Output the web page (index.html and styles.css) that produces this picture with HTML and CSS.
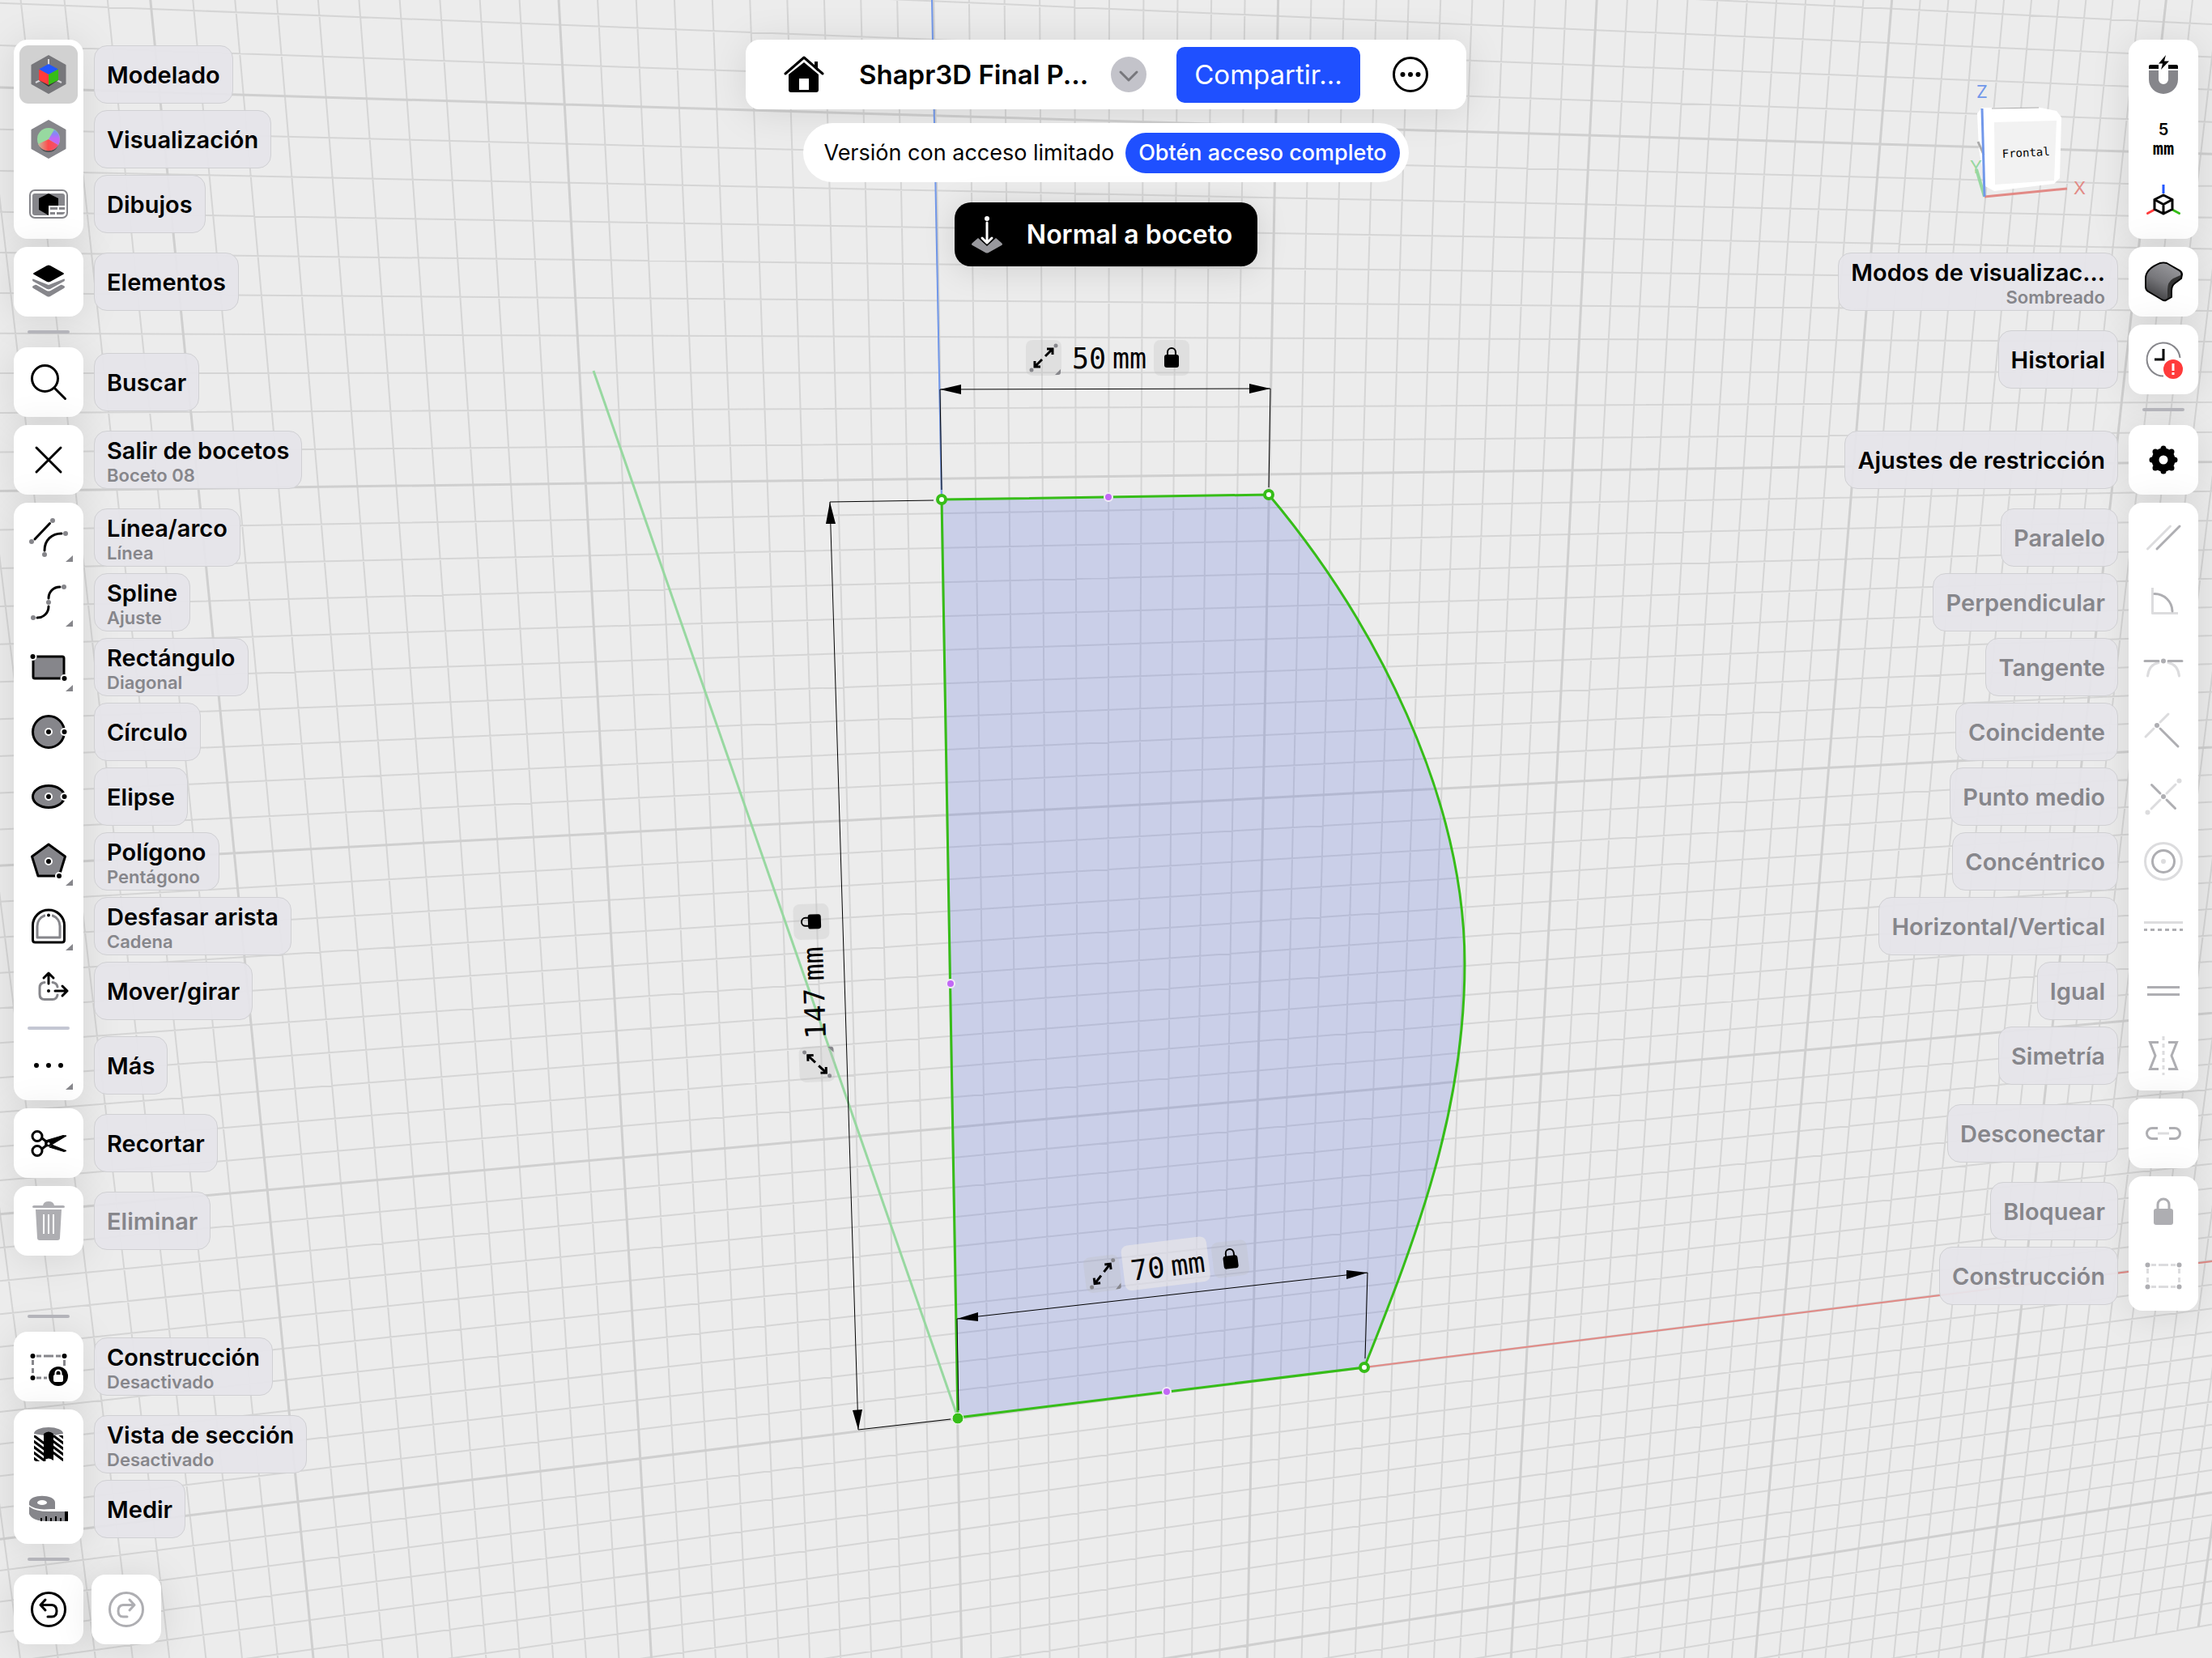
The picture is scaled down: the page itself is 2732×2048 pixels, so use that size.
FILE: index.html
```html
<!DOCTYPE html>
<html lang="es">
<head>
<meta charset="utf-8">
<meta name="viewport" content="width=device-width, initial-scale=1">
<title>Shapr3D Final P...</title>
<link rel="stylesheet" href="styles.css">
</head>
<body>
<main class="workspace">

<svg class="scene" viewBox="0 0 2732 2048" preserveAspectRatio="xMidYMid slice" role="img" aria-label="Boceto 08">
  <g id="grid"></g>
  <line class="axis-z" x1="1151" y1="0" x2="1163" y2="617"/>
  <line class="axis-y" x1="733" y1="458" x2="1183" y2="1751"/>
  <line class="axis-x" x1="1685" y1="1689" x2="2732" y2="1558"/>
  <path class="profile" d="M1183 1751 L1163 617 L1567 611 C1699 768 1809 985 1809 1190 C1809 1370 1752 1522 1685 1689 Z"/>

  <g class="dimension">
    <path d="M1163 605 L1161 481 L1569 480 L1567 602"/>
    <path d="M1153 618 L1025 620 L1060 1766 L1174 1753"/>
    <path d="M1184 1742 L1182 1629 L1689 1572 L1686 1678"/>
    <path class="head" d="M1161 481l26-6v12zM1569 480l-26-6v12zM1025 620l-5 27h12zM1060 1766l-7-24l12-1zM1182 1629l26-8v11zM1689 1572l-26-3v11z"/>
  </g>

  <g class="points">
    <circle cx="1163" cy="617" r="5"/><circle cx="1567" cy="611" r="5"/><circle cx="1685" cy="1689" r="5"/>
    <circle class="solid" cx="1183" cy="1752" r="7"/>
    <circle class="mid" cx="1369" cy="614" r="5"/><circle class="mid" cx="1174" cy="1215" r="5"/><circle class="mid" cx="1441" cy="1719" r="5"/>
  </g>

  <defs>
    <g id="expand">
      <rect class="badge" x="-22" y="-22" width="44" height="44" rx="8"/>
      <path class="expand-arrows" d="M2-2L10-10M4-11H11V-4M-2 2L-10 10M-4 11H-11V4"/>
      <path fill="#86868b" d="M14 21l7-7v4q0 3-3 3z"/>
      <circle cx="15" cy="-15" r="2.500" fill="#86868b"/><circle cx="-15" cy="15" r="2.500" fill="#86868b"/>
    </g>
    <g id="lock">
      <rect class="badge" x="-22" y="-22" width="44" height="44" rx="8"/>
      <rect x="-9" y="-4" width="18" height="16" rx="3"/>
      <path fill="none" stroke="#000" stroke-width="2" d="M-5-3V-7a5 5 0 0 1 10 0V-3"/>
    </g>
  </defs>
  <g class="measure">
    <use href="#expand" x="1289" y="442"/>
    <text x="1324" y="455">50</text><text x="1374" y="455">mm</text>
    <use href="#lock" x="1447" y="442"/>
  </g>
  <g class="measure" transform="translate(1020 1283) rotate(-92)">
    <use href="#expand" x="-31" y="-12"/>
    <text x="0" y="0">147</text><text x="72" y="0">mm</text>
    <use href="#lock" x="145" y="-13"/>
  </g>
  <g class="measure over-profile" transform="translate(1398 1582) rotate(-7)">
    <rect class="plate" x="-9" y="-44" width="106" height="56" rx="8"/>
    <use href="#expand" x="-35" y="-13"/>
    <text x="0" y="0">70</text><text x="50" y="0">mm</text>
    <use href="#lock" x="124" y="-12"/>
  </g>

  <g class="view-cube">
    <path class="sides" d="M2442 140l6-7l72 0l20 4l6 8l-2 75l-7 7l-74 9l-11-6l-8-46z"/>
    <path class="face" d="M2463 151l77-2l-3 74l-73 5z"/>
    <path d="M2460 134l58-1" stroke="#aaa" stroke-width="1"/>
    <path d="M2443 175l7 16" stroke="#aaa" stroke-width="3"/>
    <path stroke="#98d8a1" stroke-width="4" d="M2451 243L2441 209"/>
    <path stroke="#e28a86" stroke-width="3" d="M2451 243L2553 233"/>
    <path stroke="#7298ea" stroke-width="3" d="M2451 243L2448 134"/>
    <text x="2441" y="121" fill="#7298ea">Z</text>
    <text x="2433" y="214" fill="#98d8a1">Y</text>
    <text x="2561" y="240" fill="#e28a86">X</text>
    <text class="face-name" transform="translate(2473 195) rotate(-3)">Frontal</text>
  </g>
</svg>

<nav class="rail rail-left" aria-label="Herramientas">
  <div class="rail-group">
    <div class="card">
      <button class="tool selected"><span class="icon"><svg viewBox="0 0 48 48"><path fill="#77777b" stroke="#77777b" stroke-width="2" stroke-linejoin="round" d="M24 1L44.500 12.500V35.500L24 47L3.500 35.500V12.500z"/><path stroke="#d8d8dc" stroke-width="2" d="M24 5V12M8 34L14 31M40 34L34 31"/><path fill="#333" d="M12 31l12 8l12-8z"/><path fill="#2257ff" d="M24 11L36 17.500L24 24L12 17.500z"/><path fill="#ff3b3b" d="M12 17.500L24 24V37L12 31z"/><path fill="#36bd18" d="M36 17.500L24 24V37L36 31z"/></svg></span><span class="label"><span class="name">Modelado</span></span></button>
      <button class="tool"><span class="icon"><svg viewBox="0 0 48 48"><defs><linearGradient id="warm" x1="0" y1="0" x2="1" y2="0"><stop offset="0" stop-color="#c9b8a0"/><stop offset=".5" stop-color="#ff4b4b"/><stop offset="1" stop-color="#f0507a"/></linearGradient><linearGradient id="cool" x1="0" y1="0" x2="0" y2="1"><stop offset="0" stop-color="#6fa8e0"/><stop offset=".3" stop-color="#8f80f8"/><stop offset=".6" stop-color="#c268f5"/></linearGradient></defs><path fill="#86868b" stroke="#86868b" stroke-width="2" stroke-linejoin="round" d="M24 1L44.500 12.500V35.500L24 47L3.500 35.500V12.500z"/><ellipse cx="24" cy="29" rx="12" ry="11" fill="#4d4d50"/><circle cx="24" cy="24" r="14" fill="#97d9a0"/><path fill="url(#warm)" d="M24 24L11 30A14 14 0 0 0 36 31z"/><path fill="url(#cool)" d="M24 24L31 12A14 14 0 0 1 36 31z"/></svg></span><span class="label"><span class="name">Visualización</span></span></button>
      <button class="tool"><span class="icon"><svg viewBox="0 0 48 48"><rect x="1" y="7" width="46" height="34" rx="6" fill="#fff" stroke="#86868b" stroke-width="2"/><rect x="4" y="11" width="40" height="27" rx="3" fill="#86868b"/><path d="M24 11L36 17V31L24 38L12 31V17z"/><path fill="#fff" d="M24 26H44V38H24z"/><path fill="#86868b" d="M26 28h9v3h-9zM37 28h7v3h-7zM26 34h6v3h-6zM34 34h10v1q-1 2-3 2h-7z"/></svg></span><span class="label"><span class="name">Dibujos</span></span></button>
    </div>
    <div class="card">
      <button class="tool"><span class="icon"><svg viewBox="0 0 48 48"><path fill="#86868b" d="M5 29L11 26.500L24 33.500L37 26.500L43 29Q45 30.500 43 32L26 42Q24 43 22 42L5 32Q3 30.500 5 29z"/><path fill="#86868b" stroke="#fff" stroke-width="2" d="M4 19L24 27L44 19Q46 22 44 24L26 34Q24 35 22 34L4 24Q2 22 4 19z"/><path stroke="#fff" stroke-width="2" d="M22 3Q24 2 26 3L43 12.500Q45 14 43 15.500L26 25Q24 26 22 25L5 15.500Q3 14 5 12.500z"/></svg></span><span class="label"><span class="name">Elementos</span></span></button>
    </div>
    <hr>
    <div class="card">
      <button class="tool"><span class="icon"><svg class="line" viewBox="0 0 48 48"><circle cx="19.500" cy="19.500" r="16"/><path d="M31 31L44.500 44.500"/></svg></span><span class="label"><span class="name">Buscar</span></span></button>
    </div>
    <div class="card">
      <button class="tool"><span class="icon"><svg class="line" viewBox="0 0 48 48"><path d="M9 9L39 39M39 9L9 39"/></svg></span><span class="label"><span class="name">Salir de bocetos</span><small>Boceto 08</small></span></button>
    </div>
    <div class="card">
      <button class="tool has-menu"><span class="icon"><svg class="line" viewBox="0 0 48 48"><path d="M7 26L25.500 6.500M19 40C19 27 28 19 40 19"/><g class="dot-grey"><circle cx="29" cy="3" r="3"/><circle cx="3" cy="29" r="3"/><circle cx="45" cy="19" r="3"/><circle cx="19" cy="45" r="3"/></g></svg></span><span class="label"><span class="name">Línea/arco</span><small>Línea</small></span></button>
      <button class="tool has-menu"><span class="icon"><svg class="line" viewBox="0 0 48 48"><path d="M38 5C30 5 24 11 24 19M24 29C24 37 18 43 10 43"/><g class="dot-grey"><circle cx="43" cy="5" r="3"/><circle cx="24" cy="24" r="3"/><circle cx="5" cy="43" r="3"/></g></svg></span><span class="label"><span class="name">Spline</span><small>Ajuste</small></span></button>
      <button class="tool has-menu"><span class="icon"><svg class="shape" viewBox="0 0 48 48"><rect x="5" y="11" width="38" height="27" rx="2"/><circle class="node" cx="4.500" cy="11" r="4"/><circle class="node" cx="43.500" cy="38" r="4"/></svg></span><span class="label"><span class="name">Rectángulo</span><small>Diagonal</small></span></button>
      <button class="tool"><span class="icon"><svg class="shape" viewBox="0 0 48 48"><circle cx="24" cy="24" r="19.500"/><circle class="node" cx="24" cy="24" r="4"/><circle class="node" cx="43.500" cy="24" r="4"/></svg></span><span class="label"><span class="name">Círculo</span></span></button>
      <button class="tool"><span class="icon"><svg class="shape" viewBox="0 0 48 48"><ellipse cx="24" cy="24" rx="19.500" ry="13.500"/><circle class="node" cx="24" cy="24" r="4"/><circle class="node" cx="43.500" cy="24" r="4"/></svg></span><span class="label"><span class="name">Elipse</span></span></button>
      <button class="tool has-menu"><span class="icon"><svg class="shape" viewBox="0 0 48 48"><path d="M24 3L44.500 18L37 42H11L3.500 18z"/><circle class="node" cx="24" cy="24" r="4"/><circle class="node" cx="37" cy="42" r="4"/></svg></span><span class="label"><span class="name">Polígono</span><small>Pentágono</small></span></button>
      <button class="tool has-menu"><span class="icon"><svg class="line" viewBox="0 0 48 48"><path d="M4.500 41V23A19.500 19 0 0 1 43.500 23V41Q43.500 44 40.500 44H7.500Q4.500 44 4.500 41z"/><path stroke="#86868b" d="M19 11A14 14 0 0 0 10 24V38H38V24A14 14 0 0 0 29 11"/><circle class="node" cx="24" cy="10.500" r="3"/></svg></span><span class="label"><span class="name">Desfasar arista</span><small>Cadena</small></span></button>
      <button class="tool"><span class="icon"><svg class="line" viewBox="0 0 48 48"><path stroke="#86868b" d="M19 13.500Q13 14 13 20V28Q13 34.500 19 34.500H29Q34 34.500 35 29M29 13.500Q34 14 35 19"/><path d="M24 15V2M18 8L24 2L30 8M32 24H47M41 18L47 24L41 30"/><circle cx="24" cy="24" r="2" fill="#000" stroke="none"/></svg></span><span class="label"><span class="name">Mover/girar</span></span></button>
      <hr>
      <button class="tool has-menu"><span class="icon"><svg viewBox="0 0 48 48"><circle cx="9" cy="24" r="3"/><circle cx="24" cy="24" r="3"/><circle cx="39" cy="24" r="3"/></svg></span><span class="label"><span class="name">Más</span></span></button>
    </div>
    <div class="card">
      <button class="tool"><span class="icon"><svg class="line" viewBox="0 0 48 48"><circle cx="10" cy="15.500" r="6"/><circle cx="10" cy="33.500" r="6"/><path d="M16 18L21 22M16 31L21 27"/><path fill="#000" stroke-width="1" d="M20 21L42 14.500L46 15L26 27Q21 29 20 27zM28 26L46 33.500L43 34.500L25 29z"/><circle cx="24" cy="24.500" r="1.500" fill="#fff" stroke="none"/></svg></span><span class="label"><span class="name">Recortar</span></span></button>
    </div>
    <div class="card">
      <button class="tool" disabled><span class="icon"><svg viewBox="0 0 48 48" fill="#aeaeb2"><path d="M17 5Q18 0 24 0T31 5H42Q44 5 44 6.500T42 8H6Q4 8 4 6.500T6 5z"/><path d="M8 10H40L38 45Q38 48 35 48H13Q10 48 10 45z"/><path fill="#fff" d="M17 16h2v24h-2zM23 16h2v24h-2zM29 16h2v24h-2z"/></svg></span><span class="label"><span class="name">Eliminar</span></span></button>
    </div>
  </div>

  <div class="rail-group">
    <hr>
    <div class="card">
      <button class="tool"><span class="icon"><svg viewBox="0 0 48 48"><path fill="none" stroke="#86868b" stroke-width="3" d="M9 11h6M18 11h12M33 11h6M4.500 16v6M4.500 26v6M43.500 16v7M9 38h6M18 38h4"/><circle cx="4.500" cy="11" r="3"/><circle cx="43.500" cy="11" r="3"/><circle cx="4.500" cy="38" r="3"/><circle cx="36" cy="36" r="12"/><rect x="30" y="34" width="12" height="9" rx="2" fill="#fff"/><path fill="none" stroke="#fff" stroke-width="2" d="M32.500 34v-2a3.500 3.500 0 0 1 7 0v2"/></svg></span><span class="label"><span class="name">Construcción</span><small>Desactivado</small></span></button>
    </div>
    <div class="card">
      <button class="tool"><span class="icon"><svg viewBox="0 0 48 48"><defs><clipPath id="cut"><path d="M6 13H42V45H6z"/></clipPath></defs><path clip-path="url(#cut)" stroke="#000" stroke-width="3" d="M4 12l16 12M4 19l16 12M4 26l16 12M4 33l16 12M4 40l16 12M28 5l16 12M28 12l16 12M28 19l16 12M28 26l16 12M28 33l16 12"/><path fill="#86868b" d="M6 11A18 8 0 0 1 42 11L30 13H18z"/><path d="M18 11Q24 6 30 11V44Q24 39 18 44z"/></svg></span><span class="label"><span class="name">Vista de sección</span><small>Desactivado</small></span></button>
      <button class="tool"><span class="icon"><svg viewBox="0 0 48 48" fill="#86868b"><path d="M0 16C0 5 32 5 32 16V24H26Q8 26 0 19z"/><ellipse cx="16" cy="16" rx="6" ry="3" fill="#fff"/><path d="M0 21Q8 27 24 27H44V39H22Q4 39 0 30z"/><path fill="#000" d="M44 27h4v12h-4zM14 35h2v4h-2zM20 33h2v6h-2zM26 35h2v4h-2zM32 33h2v6h-2zM38 35h2v4h-2z"/></svg></span><span class="label"><span class="name">Medir</span></span></button>
    </div>
    <hr>
    <div class="history">
      <div class="card"><button class="tool" aria-label="Deshacer"><span class="icon"><svg class="line" viewBox="0 0 48 48"><circle cx="24" cy="24" r="20.500"/><path d="M20 12L14 18.500L20 25M14 18.500H28Q34 19 34 26T28 33H23"/></svg></span></button></div>
      <div class="card"><button class="tool" aria-label="Rehacer" disabled><span class="icon"><svg class="line soft" viewBox="0 0 48 48"><circle cx="24" cy="24" r="20.500"/><path d="M28 12L34 18.500L28 25M34 18.500H20Q14 19 14 26T20 33H25"/></svg></span></button></div>
    </div>
  </div>
</nav>

<header class="top">
  <div class="title-bar">
    <button class="plain" aria-label="Inicio"><svg width="50" height="48" viewBox="0 0 50 48"><path fill="none" stroke="#000" stroke-width="3" stroke-linecap="round" stroke-linejoin="round" d="M2 23L25 3L48 23"/><path d="M38 8h4v12l-4-4zM25 9L43 24V43Q43 46 40 46H9Q6 46 6 43V24z"/><path fill="#fff" d="M19 29h12v14H19z"/></svg></button>
    <h1>Shapr3D Final P...</h1>
    <button class="plain" aria-label="Opciones del diseño"><svg width="44" height="44" viewBox="0 0 44 44"><circle cx="22" cy="22" r="22" fill="#c3c3ca"/><path fill="none" stroke="#77777c" stroke-width="3" stroke-linecap="round" stroke-linejoin="round" d="M12 19l10 10l10-10"/></svg></button>
    <button class="share">Compartir...</button>
    <button class="plain" aria-label="Más opciones"><svg width="44" height="44" viewBox="0 0 44 44"><circle cx="22" cy="22" r="20.500" fill="none" stroke="#000" stroke-width="3"/><circle cx="12.500" cy="22" r="3"/><circle cx="22" cy="22" r="3"/><circle cx="31.500" cy="22" r="3"/></svg></button>
  </div>
  <div class="banner"><span>Versión con acceso limitado</span><a href="#acceso">Obtén acceso completo</a></div>
  <button class="normal"><svg width="40" height="48" viewBox="0 0 40 48"><path fill="#98989d" d="M9 28L20 38L31 28L38 34Q40 36 38 37L22 46Q20 47 18 46L2 37Q0 36 2 34z"/><circle cx="20" cy="4" r="3" fill="#fff"/><path fill="none" stroke="#fff" stroke-width="3" stroke-linecap="round" stroke-linejoin="round" d="M20 9V34M14 28L20 34L26 28"/></svg><span>Normal a boceto</span></button>
</header>

<nav class="rail rail-right" aria-label="Vista y restricciones">
  <div class="rail-group">
    <div class="card">
      <button class="tool" aria-label="Ajustar a la cuadrícula"><span class="icon"><svg viewBox="0 0 48 48"><path fill="#86868b" d="M6 19H18V30a6 6 0 0 0 12 0V19H42V30a18 18 0 0 1-36 0z"/><path d="M6 17V14Q6 12 8 12H18V17zM30 17V12H40Q42 12 42 14V17zM27 0L18 10.500H23L21 18L31 7.500H25z"/></svg></span></button>
      <button class="tool unit"><span class="icon"><span class="amount">5</span><span class="measure-unit">mm</span></span></button>
      <button class="tool" aria-label="Orientación"><span class="icon"><svg class="line" viewBox="0 0 48 48"><path stroke="#2257ff" stroke-linecap="butt" d="M24 0V11"/><path stroke="#ff3b3b" d="M4.500 35.500L12 31.500"/><path stroke="#36bd18" d="M43.500 35.500L36 31.500"/><path d="M24 13L35 18.500V30.500L24 36L13 30.500V18.500zM13 18.500L24 24.500L35 18.500M24 24.500V36"/></svg></span></button>
    </div>
    <div class="card">
      <button class="tool"><span class="icon"><svg viewBox="0 0 48 48"><defs><linearGradient id="steel" x1=".7" y1="0" x2=".2" y2="1"><stop offset="0" stop-color="#98989c"/><stop offset=".5" stop-color="#77777b"/><stop offset="1" stop-color="#3c3c3e"/></linearGradient></defs><path fill="#333" stroke="#000" stroke-width="2" stroke-linejoin="round" d="M2 20Q2 8 20 1Q24 0 28 1L44 10Q47 12 47 15L46 20L38 26Q34 29 34 35V43L27 47Q25 48 22 46L5 36Q2 34 2 30z"/><path fill="url(#steel)" d="M3 20Q3 9 20 2Q24 1 28 2L43 11Q46 13 45 16L36 20Q29 24 29 34V43Q28 47 22 45L6 35Q3 33 3 30z"/></svg></span><span class="label"><span class="name">Modos de visualizac...</span><small>Sombreado</small></span></button>
    </div>
    <div class="card">
      <button class="tool"><span class="icon"><svg viewBox="0 0 48 48"><path fill="none" stroke="#86868b" stroke-width="2" d="M44.500 22A20.500 20.500 0 1 0 24 44.500"/><path fill="none" stroke="#000" stroke-width="3" d="M24 11V24H13"/><circle cx="36" cy="36" r="12" fill="#ff3b3b"/><path stroke="#fff" stroke-width="3" d="M36 29V38M36 40V43"/></svg></span><span class="label"><span class="name">Historial</span></span></button>
    </div>
    <hr>
    <div class="card">
      <button class="tool"><span class="icon"><svg viewBox="0 0 48 48"><circle cx="24" cy="24" r="10" fill="none" stroke="#000" stroke-width="9"/><path stroke="#000" stroke-width="7" stroke-linecap="round" d="M24 10V10M24 38V38M10 24V24M38 24V24M14 14V14M34 34V34M34 14V14M14 34V34"/></svg></span><span class="label"><span class="name">Ajustes de restricción</span></span></button>
    </div>
    <div class="card">
      <button class="tool" disabled><span class="icon"><svg class="line soft" viewBox="0 0 48 48"><path class="faint" d="M4.500 38L32.500 10"/><path d="M16 38L44 10"/></svg></span><span class="label"><span class="name">Paralelo</span></span></button>
      <button class="tool" disabled><span class="icon"><svg class="line soft" viewBox="0 0 48 48"><path class="faint" stroke-linecap="butt" d="M10.500 6V37.500H42"/><path d="M13 13.500A22 22 0 0 1 35 35"/></svg></span><span class="label"><span class="name">Perpendicular</span></span></button>
      <button class="tool" disabled><span class="icon"><svg class="line soft" viewBox="0 0 48 48"><path class="faint" d="M4.500 35Q6 21 18 18.500M43.500 35Q42 21 30 18.500"/><path d="M1 16.500H18M30 16.500H47"/><circle class="fill" cx="24" cy="16.500" r="3"/></svg></span><span class="label"><span class="name">Tangente</span></span></button>
      <button class="tool" disabled><span class="icon"><svg class="line soft" viewBox="0 0 48 48"><path class="faint" d="M2 30L12 20M20 12L30 2"/><path d="M20 20L42 42"/><circle class="fill" cx="16" cy="16" r="3"/></svg></span><span class="label"><span class="name">Coincidente</span></span></button>
      <button class="tool" disabled><span class="icon"><svg class="line soft" viewBox="0 0 48 48"><path class="faint" d="M9 39L20 28M28 20L39 9"/><path d="M9.500 9.500L20 20M28 28L38.500 38.500"/><circle class="fill" cx="24" cy="24" r="3"/><circle class="fill-faint" cx="43.500" cy="4.500" r="3"/><circle class="fill-faint" cx="4.500" cy="43.500" r="3"/></svg></span><span class="label"><span class="name">Punto medio</span></span></button>
      <button class="tool" disabled><span class="icon"><svg class="line soft" viewBox="0 0 48 48"><circle class="faint" cx="24" cy="24" r="22.500"/><circle cx="24" cy="24" r="13.500"/><circle class="fill-faint" cx="24" cy="24" r="3"/></svg></span><span class="label"><span class="name">Concéntrico</span></span></button>
      <button class="tool" disabled><span class="icon"><svg class="line soft flat" viewBox="0 0 48 48"><path class="faint" d="M0 19.500H48"/><path d="M0 28.500h4M8 28.500h5M17 28.500h5M26 28.500h5M35 28.500h5M44 28.500h4"/></svg></span><span class="label"><span class="name">Horizontal/Vertical</span></span></button>
      <button class="tool" disabled><span class="icon"><svg class="line soft flat" viewBox="0 0 48 48"><path d="M4 19.500H44M4 28.500H44"/></svg></span><span class="label"><span class="name">Igual</span></span></button>
      <button class="tool" disabled><span class="icon"><svg class="line soft flat" viewBox="0 0 48 48"><path class="faint" stroke-dasharray="5 4" d="M24 0V48"/><path d="M18 7.500H7.500L14 24L7.500 40.500H18M30 7.500H40.500L34 24L40.500 40.500H30"/></svg></span><span class="label"><span class="name">Simetría</span></span></button>
    </div>
    <div class="card">
      <button class="tool" disabled><span class="icon"><svg class="line soft flat" viewBox="0 0 48 48"><path class="faint" d="M17 24H31"/><path d="M17 17.500H10A6.500 6.500 0 0 0 10 30.500H17M31 17.500H38A6.500 6.500 0 0 1 38 30.500H31"/></svg></span><span class="label"><span class="name">Desconectar</span></span></button>
    </div>
    <div class="card">
      <button class="tool" disabled><span class="icon"><svg class="line soft" viewBox="0 0 48 48"><rect x="12" y="21" width="24" height="20" rx="3" fill="#aeaeb2" stroke="none"/><path d="M17 22V16A7 7 0 0 1 31 16V22"/></svg></span><span class="label"><span class="name">Bloquear</span></span></button>
      <button class="tool" disabled><span class="icon"><svg class="line soft flat" viewBox="0 0 48 48"><path class="faint" d="M9 10.500h6M18 10.500h12M33 10.500h6M9 37.500h6M18 37.500h12M33 37.500h6M4.500 15v6M4.500 26v6M43.500 15v6M43.500 26v6"/><circle class="fill" cx="4.500" cy="10.500" r="3"/><circle class="fill" cx="43.500" cy="10.500" r="3"/><circle class="fill" cx="4.500" cy="37.500" r="3"/><circle class="fill" cx="43.500" cy="37.500" r="3"/></svg></span><span class="label"><span class="name">Construcción</span></span></button>
    </div>
  </div>
</nav>

</main>
<script src="grid.js"></script>
</body>
</html>
```
FILE: styles.css
```css
* { box-sizing: border-box; }

body {
  margin: 0;
  background: #ececec;
  color: #000;
  font-family: Inter, "Liberation Sans", sans-serif;
}

button {
  margin: 0;
  padding: 0;
  border: 0;
  background: none;
  color: inherit;
  font: inherit;
}

.workspace {
  position: relative;
  display: flex;
  justify-content: space-between;
  min-height: 100vh;
  padding: 49px 17px 17px;
  overflow: hidden;
}

/* Modelling space */
.scene {
  position: absolute;
  inset: 0;
  width: 100%;
  height: 100%;
}

#grid path { fill: none; stroke: #d5d5d5; stroke-width: 2; }
#grid .major { stroke: #cfcfcf; stroke-width: 3; }
.axis-z { stroke: #7298ea; stroke-width: 2; }
.axis-y { stroke: #98d8a1; stroke-width: 3; }
.axis-x { stroke: #e28a86; stroke-width: 2; }
.profile { fill: rgba(71, 96, 221, .2); stroke: #36bd18; stroke-width: 3; }
.dimension path { fill: none; stroke: #000; stroke-width: 1; }
.dimension .head { fill: #000; stroke: none; }
.points circle { fill: #fff; stroke: #36bd18; stroke-width: 4; }
.points .solid { fill: #36bd18; stroke: #fff; stroke-width: 1; }
.points .mid { fill: #c268f5; stroke: #f1ecf6; stroke-width: 2; }
.measure text { font: 35px "DejaVu Sans Mono", monospace; }
.badge { fill: rgba(190, 190, 190, .28); }
.over-profile .badge { fill: rgba(226, 224, 214, .5); }
.plate { fill: rgba(236, 234, 232, .6); }
.expand-arrows { fill: none; stroke: #000; stroke-width: 3; }
.view-cube path { fill: none; }
.view-cube .sides { fill: #fff; }
.view-cube .face { fill: #f2f2f2; }
.view-cube text { font: 22px Inter, sans-serif; }
.view-cube .face-name { font: 14px "DejaVu Sans Mono", monospace; }

/* Tool rails */
.rail {
  position: relative;
  display: flex;
  flex-direction: column;
  justify-content: space-between;
  width: 86px;
}

.rail-group { display: flex; flex-direction: column; gap: 10px; }

hr {
  width: 52px;
  height: 4px;
  margin: 7px auto;
  border: 0;
  border-radius: 2px;
  background: #b7b7bd;
}

.card {
  display: flex;
  flex-direction: column;
  gap: 8px;
  width: 86px;
  padding: 7px;
  border-radius: 17px;
  background: #fff;
  box-shadow: 0 4px 50px rgba(0, 0, 0, .1);
}

.card hr { margin: 0 auto; background: #c4c7d3; }

.rail-right .card { align-items: flex-end; }

.tool {
  position: relative;
  display: flex;
  gap: 20px;
  width: max-content;
  height: 72px;
  text-align: left;
}

.rail-right .tool { flex-direction: row-reverse; text-align: right; }

.icon {
  display: flex;
  flex-direction: column;
  align-items: center;
  justify-content: center;
  width: 72px;
  height: 72px;
  border-radius: 11px;
}

.selected .icon { background: #d1d1d1; }
.icon svg { width: 48px; height: 48px; overflow: visible; }

.has-menu::after {
  content: "";
  position: absolute;
  top: 58px;
  left: 57px;
  width: 9px;
  height: 8px;
  background: #86868b;
  clip-path: polygon(100% 0, 100% 100%, 0 100%);
}

.label {
  display: flex;
  flex-direction: column;
  justify-content: center;
  height: 72px;
  padding: 2px 15px 0;
  border: 1px solid #d0d0d3;
  border-radius: 16px;
  background: rgba(229, 228, 234, .94);
  white-space: nowrap;
}

.name { font-size: 29px; font-weight: 600; line-height: 36px; }
.label small { color: #86868b; font-size: 22px; font-weight: 600; line-height: 24px; }
.tool:disabled .name { color: #86868b; }
.amount { font-size: 20px; font-weight: 600; line-height: 24px; }
.measure-unit { font: 600 22px/24px "DejaVu Sans Mono", monospace; }

.line { fill: none; stroke: #000; stroke-width: 3; stroke-linecap: round; stroke-linejoin: round; }
.shape { fill: #86868b; stroke: #000; stroke-width: 3; stroke-linejoin: round; }
.node { fill: #000; stroke: #fff; stroke-width: 2; }
.dot-grey { fill: #86868b; stroke: none; }
.soft { stroke: #aeaeb2; }
.flat { stroke-linecap: butt; stroke-linejoin: miter; }
.faint { stroke: #dcdcde; }
.fill { fill: #aeaeb2; stroke: none; }
.fill-faint { fill: #dcdcde; stroke: none; }

.history { display: flex; gap: 10px; }
.history .card { flex: none; }

/* Top bar */
.top {
  position: relative;
  display: flex;
  flex-direction: column;
  align-items: center;
}

.title-bar {
  display: flex;
  align-items: center;
  height: 86px;
  padding: 0 47px;
  border-radius: 17px;
  background: #fff;
  box-shadow: 0 4px 50px rgba(0, 0, 0, .1);
}

.plain { display: flex; }
h1 { width: 280px; margin: 0 31px 0 43px; font-size: 33px; font-weight: 600; line-height: 40px; white-space: nowrap; }

.share {
  width: 227px;
  height: 69px;
  margin: 0 40px 0 37px;
  border-radius: 10px;
  background: #1f50ff;
  color: #fff;
  font-size: 33px;
}

.banner {
  display: flex;
  align-items: center;
  gap: 14px;
  height: 73px;
  margin-top: 17px;
  padding: 0 11px 0 25px;
  border-radius: 37px;
  background: #fff;
  font-size: 27px;
}

.banner a {
  height: 50px;
  padding: 0 16px;
  border-radius: 25px;
  background: #1f50ff;
  color: #fff;
  font-weight: 500;
  line-height: 50px;
  text-decoration: none;
}

.normal {
  display: flex;
  align-items: center;
  gap: 29px;
  height: 79px;
  margin-top: 25px;
  padding: 0 31px 0 20px;
  border-radius: 20px;
  background: #000;
  color: #fff;
  font-size: 32px;
  font-weight: 600;
  box-shadow: 0 4px 40px rgba(0, 0, 0, .12);
}
```
FILE: grid.js
```js
// Projects the sketch plane (millimetres) onto the scene and draws its 5 mm grid.
const PLANE = { x: -100, z: 0, width: 250, height: 200 };
const [p0, p1, p2, p3] = [[368, 1855], [2203, 1624], [2322, 178], [197, 114]];

const dx1 = p1[0] - p2[0], dx2 = p3[0] - p2[0], dx3 = p0[0] - p1[0] + p2[0] - p3[0];
const dy1 = p1[1] - p2[1], dy2 = p3[1] - p2[1], dy3 = p0[1] - p1[1] + p2[1] - p3[1];
const det = dx1 * dy2 - dx2 * dy1;
const g = (dx3 * dy2 - dx2 * dy3) / det;
const h = (dx1 * dy3 - dx3 * dy1) / det;

function project(x, z) {
  const u = (x - PLANE.x) / PLANE.width;
  const v = (z - PLANE.z) / PLANE.height;
  const w = g * u + h * v + 1;
  const along = i => (p1[i] - p0[i] + g * p1[i]) * u + (p3[i] - p0[i] + h * p3[i]) * v + p0[i];
  return (along(0) / w).toFixed(1) + " " + (along(1) / w).toFixed(1);
}

let minor = "", major = "";
function rule(position, from, to) {
  const segment = "M" + from + "L" + to;
  if (position % 50 === 0) major += segment; else minor += segment;
}
for (let x = -200; x <= 300; x += 5) rule(x, project(x, -80), project(x, 260));
for (let z = -80; z <= 260; z += 5) rule(z, project(-200, z), project(300, z));

document.getElementById("grid").innerHTML =
  '<path d="' + minor + '"/><path class="major" d="' + major + '"/>';
```
